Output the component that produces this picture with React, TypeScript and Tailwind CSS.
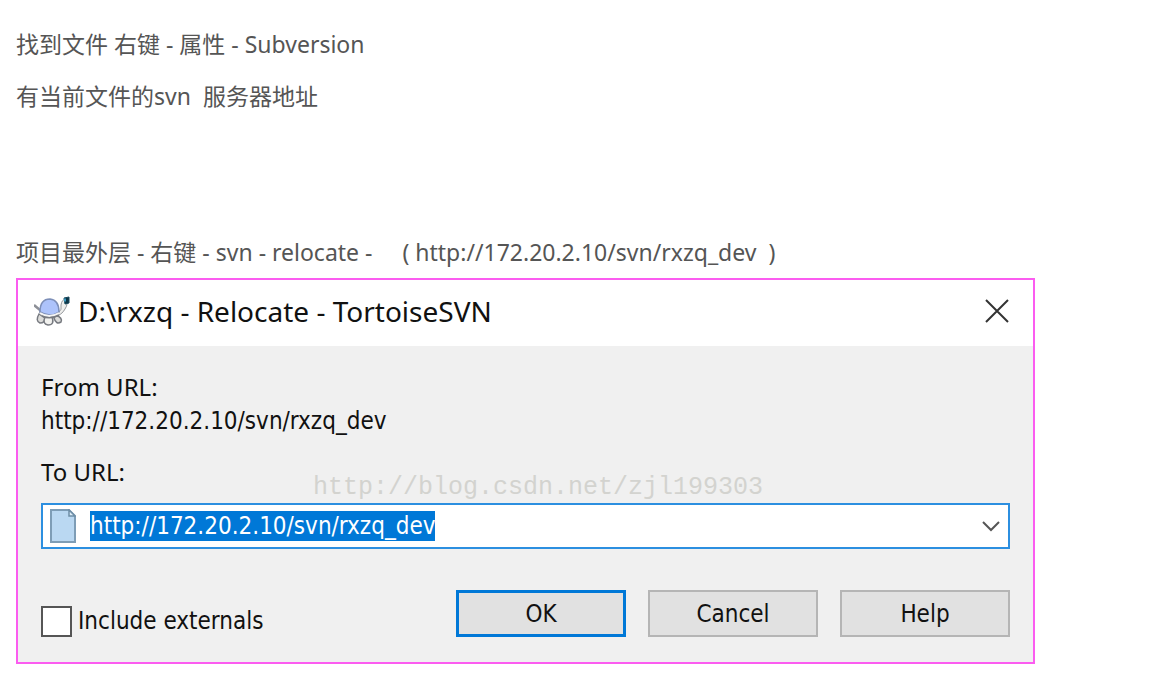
import { useEffect, useRef } from "react";

function TortoiseIcon() {
  return (
    <svg width="36" height="30" viewBox="0 0 36 30" aria-hidden="true">
      <path d="M0 9 L6 14 L9 19" fill="none" stroke="#8d9097" strokeWidth="2.5" />
      <path d="M5 18 Q1 25 6 27 Q11 27 11 22 Z" fill="#dcdcda" stroke="#777a80" strokeWidth="1.5" />
      <path d="M22 19 Q29 22 27 26 Q22 29 20 22 Z" fill="#dcdcda" stroke="#777a80" strokeWidth="1.5" />
      <path d="M11 21 Q8 28 14 29 Q21 29 18 21 Z" fill="#f2f2ef" stroke="#777a80" strokeWidth="1.5" />
      <path d="M6 16 Q15 26 25 16 Q28 14 27 9 Q28 3 31 4 Q35 7 31 13 Q28 19 20 21 Q12 23 6 18 Z" fill="#eeeeec" stroke="#94979c" />
      <path d="M6 16 Q6 3 16 3 Q25 4 25 16 Q16 22 6 16 Z" fill="#adc3fb" stroke="#7d8fb8" strokeWidth="1.5" />
      <path d="M6 17 Q15 23 25 17" fill="none" stroke="#f5f5f5" strokeWidth="2" />
      <path d="M8 20 Q16 24 25 19" fill="none" stroke="#777a80" strokeWidth="1.5" />
      <path d="M30 2 L35 1 L35 7 L31 8 Z" fill="#0b3547" stroke="#18475a" />
      <path d="M30 4 L32 4" stroke="#3e9bc1" strokeWidth="3" />
    </svg>
  );
}

function FileIcon() {
  return (
    <svg width="26" height="34" viewBox="0 0 26 34" aria-hidden="true" className="shrink-0">
      <path d="M1 1 H19 L25 7 V33 H1 Z" fill="#bad8f2" stroke="#7e9db6" strokeWidth="2" />
      <path d="M19 1 V7 H25 Z" fill="#dcecf8" stroke="#6e8ea7" strokeWidth="1.5" />
    </svg>
  );
}

function RelocateDialog() {
  const urlRef = useRef<HTMLInputElement>(null);

  useEffect(() => {
    urlRef.current?.focus();
    urlRef.current?.select();
  }, []);

  const button = "h-[47px] w-[170px] bg-[#e1e1e1]";

  return (
    <section
      role="dialog"
      aria-labelledby="dialog-title"
      className="w-full max-w-[1019px] border-2 border-[#fb5cf0] bg-[#f0f0f0] font-['DejaVu_Sans_Condensed','Noto_Sans',sans-serif] text-2xl text-[#111]"
    >
      <header className="flex h-[66px] items-center bg-white pr-6 pb-1 pl-4">
        <TortoiseIcon />
        <h1 id="dialog-title" className="ml-2 font-['Noto_Sans',sans-serif] text-[28px] leading-9">
          D:\rxzq - Relocate - TortoiseSVN
        </h1>
        <button type="button" aria-label="Close" className="ml-auto">
          <svg width="24" height="24" viewBox="0 0 24 24" aria-hidden="true">
            <path d="M1 1 L23 23 M23 1 L1 23" stroke="#333" strokeWidth="2" />
          </svg>
        </button>
      </header>

      <form className="px-[23px] pt-6 pb-[25px]" onSubmit={(e) => e.preventDefault()}>
        <p className="font-['Noto_Sans',sans-serif] leading-[34px]">From URL:</p>
        <p className="leading-[34px]">http://172.20.2.10/svn/rxzq_dev</p>
        <div className="relative mt-4">
          <label htmlFor="to-url" className="block font-['Noto_Sans',sans-serif] leading-9">
            To URL:
          </label>
          <span className="pointer-events-none absolute top-5 left-[272px] font-['Liberation_Mono',monospace] text-[25px] leading-7 text-[#d3d3cf]">
            http://blog.csdn.net/zjl199303
          </span>
        </div>
        <div className="mt-[13px] flex h-[46px] items-center border-2 border-[#2c8fe0] bg-white px-[7px]">
          <FileIcon />
          <input
            id="to-url"
            ref={urlRef}
            type="text"
            defaultValue="http://172.20.2.10/svn/rxzq_dev"
            className="ml-3.5 h-[30px] min-w-0 flex-1 leading-[30px] outline-none selection:bg-[#0078d7] selection:text-white"
          />
          <button type="button" aria-label="Show recent URLs" className="mr-px">
            <svg width="18" height="11" viewBox="0 0 18 11" aria-hidden="true">
              <path d="M1 1 L9 9 L17 1" fill="none" stroke="#555" strokeWidth="2" />
            </svg>
          </button>
        </div>
        <div className="mt-[41px] flex items-end justify-between">
          <label className="flex items-center gap-1.5">
            <input
              type="checkbox"
              className="size-[31px] appearance-none border-2 border-[#555] bg-white checked:bg-[#0078d7]"
            />
            Include externals
          </label>
          <div className="flex gap-[22px]">
            <button type="submit" className={`${button} border-3 border-[#0078d7]`}>
              OK
            </button>
            <button type="button" className={`${button} border-2 border-[#b5b5b5]`}>
              Cancel
            </button>
            <button type="button" className={`${button} border-2 border-[#b5b5b5]`}>
              Help
            </button>
          </div>
        </div>
      </form>
    </section>
  );
}

export default function App() {
  return (
    <main className="bg-white px-4 pt-[26px] pb-6 font-['Noto_Sans','Noto_Sans_CJK_SC',sans-serif]">
      <article className="text-[23px] leading-9 text-[#555]">
        <p>找到文件 右键 - 属性 - Subversion</p>
        <p className="mt-4">有当前文件的svn&nbsp; 服务器地址</p>
        <p className="mt-[120px] mb-2">
          项目最外层 - 右键 - svn - relocate -&nbsp; &nbsp;&nbsp;&nbsp;( http://172.20.2.10/svn/rxzq_dev&nbsp; )
        </p>
      </article>
      <RelocateDialog />
    </main>
  );
}
